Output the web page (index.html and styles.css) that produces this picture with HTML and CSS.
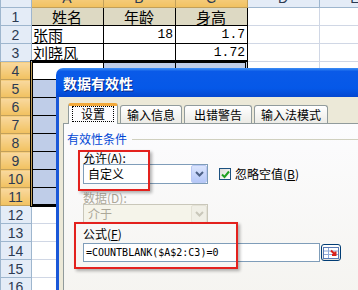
FILE: index.html
```html
<!DOCTYPE html>
<html lang="zh-CN">
<head>
    <meta charset="UTF-8">
    <meta name="viewport" content="width=device-width, initial-scale=1.0">
    <title>数据有效性</title>
    <link rel="stylesheet" href="styles.css">
</head>
<body>
    <!-- Worksheet -->
    <table class="sheet">
        <colgroup>
            <col class="c-num"><col class="c-cell"><col class="c-cell"><col class="c-cell"><col class="c-cell"><col class="c-cell">
        </colgroup>
        <tr class="col-head">
            <th></th><th class="sel">A</th><th class="sel">B</th><th class="sel">C</th><th>D</th><th>E</th>
        </tr>
        <tr><th>1</th><td class="b head">姓名</td><td class="b head">年龄</td><td class="b head">身高</td><td></td><td></td></tr>
        <tr><th>2</th><td class="b">张雨</td><td class="b num">18</td><td class="b num">1.7</td><td></td><td></td></tr>
        <tr><th>3</th><td class="b">刘晓风</td><td class="b"></td><td class="b num">1.72</td><td></td><td></td></tr>
        <tr><th class="sel">4</th><td class="b"></td><td class="b hl"></td><td class="b hl"></td><td></td><td></td></tr>
        <tr><th class="sel">5</th><td class="b hl"></td><td class="b hl"></td><td class="b hl"></td><td></td><td></td></tr>
        <tr><th class="sel">6</th><td class="b hl"></td><td class="b hl"></td><td class="b hl"></td><td></td><td></td></tr>
        <tr><th class="sel">7</th><td class="b hl"></td><td class="b hl"></td><td class="b hl"></td><td></td><td></td></tr>
        <tr><th class="sel">8</th><td class="b hl"></td><td class="b hl"></td><td class="b hl"></td><td></td><td></td></tr>
        <tr><th class="sel">9</th><td class="b hl"></td><td class="b hl"></td><td class="b hl"></td><td></td><td></td></tr>
        <tr><th class="sel">10</th><td class="b hl"></td><td class="b hl"></td><td class="b hl"></td><td></td><td></td></tr>
        <tr><th class="sel">11</th><td class="b hl"></td><td class="b hl"></td><td class="b hl"></td><td></td><td></td></tr>
        <tr><th>12</th><td></td><td></td><td></td><td></td><td></td></tr>
        <tr><th>13</th><td></td><td></td><td></td><td></td><td></td></tr>
        <tr><th>14</th><td></td><td></td><td></td><td></td><td></td></tr>
        <tr><th>15</th><td></td><td></td><td></td><td></td><td></td></tr>
        <tr><th>16</th><td></td><td></td><td></td><td></td><td></td></tr>
    </table>

    <!-- Selected range A4:C11 -->
    <div class="selection"></div>

    <!-- Data validation dialog -->
    <div class="dialog">
        <div class="dialog-title">数据有效性</div>
        <div class="dialog-body">
            <div class="tabs">
                <div class="tab active"><span class="focus">设置</span></div>
                <div class="tab">输入信息</div>
                <div class="tab wide">出错警告</div>
                <div class="tab">输入法模式</div>
            </div>
            <div class="panel">
                <div class="group">有效性条件</div>

                <div class="label">允许(<u>A</u>):</div>
                <div class="row">
                    <div class="combo">
                        <span>自定义</span>
                        <span class="drop">
                            <svg width="9" height="6" viewBox="0 0 9 6"><path d="M1 1l3.5 3.5L8 1" fill="none" stroke="#4d6185" stroke-width="2"/></svg>
                        </span>
                    </div>
                    <div class="check">
                        <span class="box">
                            <svg width="9" height="9" viewBox="0 0 9 9"><path d="M1 4.5l2.5 2.5L8 1.5" fill="none" stroke="#21a121" stroke-width="2"/></svg>
                        </span>
                        <span>忽略空值(<u>B</u>)</span>
                    </div>
                </div>

                <div class="label off">数据(<u>D</u>):</div>
                <div class="row">
                    <div class="combo off">
                        <span>介于</span>
                        <span class="drop">
                            <svg width="9" height="6" viewBox="0 0 9 6"><path d="M1 1l3.5 3.5L8 1" fill="none" stroke="#c9c7ba" stroke-width="2"/></svg>
                        </span>
                    </div>
                </div>

                <div class="label formula-label">公式(<u>F</u>)</div>
                <div class="row formula-row">
                    <div class="formula">=COUNTBLANK($A$2:C3)=0</div>
                    <div class="ref-btn">
                        <svg width="16" height="12" viewBox="0 0 16 12">
                            <rect x="0.5" y="0.5" width="15" height="11" fill="#fff" stroke="#5a7bb5"/>
                            <path d="M1 4h14M1 7.5h14M5.5 1v10" stroke="#8fa9d8"/>
                            <path d="M8 3.5l4.5 4.5M12.5 4.5v3.5H9" fill="none" stroke="#d8221b" stroke-width="2"/>
                        </svg>
                    </div>
                </div>
            </div>
        </div>
        <!-- red highlight boxes -->
        <div class="mark mark-allow"></div>
        <div class="mark mark-formula"></div>
    </div>
</body>
</html>
```

FILE: styles.css
```css
* {
    box-sizing: border-box;
}

body {
    margin: 0;
    width: 358px;
    height: 290px;
    overflow: hidden;
    position: relative;
    background-color: #fff;
    font-family: "Noto Sans CJK SC", sans-serif;
}

/* ---------- worksheet ---------- */

.sheet {
    border-collapse: collapse;
    table-layout: fixed;
    width: 390px;
    margin-top: -13px;
    font-size: 15px;
    color: #000;
}

.c-num {
    width: 31px;
}

.c-cell {
    width: 72px;
}

.sheet tr {
    height: 18px;
}

.sheet td,
.sheet th {
    padding: 0 2px 0 1px;
    border: 1px solid #d0d7e5;
    line-height: 16px;
    white-space: nowrap;
    overflow: hidden;
    font-weight: normal;
}

.sheet th {
    font-family: "Liberation Sans", sans-serif;
    font-size: 14px;
    color: #2c3a52;
    text-align: center;
    background-color: #e4ecf7;
    border-color: #9eb6ce;
}

.sheet th.sel {
    background: linear-gradient(#f9d99f, #f1c15f);
    border-color: #c2a05a;
}

.sheet .col-head {
    height: 20px;
}

.sheet td.b {
    border-color: #000;
}

.sheet td.head {
    background-color: #ddd9c3;
    text-align: center;
}

.sheet td.num {
    text-align: right;
    font-family: "Liberation Mono", monospace;
    font-size: 13px;
}

.sheet td.hl {
    background-color: #bfcde8;
}

.selection {
    position: absolute;
    left: 30px;
    top: 60px;
    width: 218px;
    height: 147px;
    border: 3px double #000;
}

/* ---------- dialog ---------- */

.dialog {
    position: absolute;
    left: 56px;
    top: 68px;
    width: 330px;
    height: 240px;
    font-size: 12px;
}

.dialog-title {
    height: 29px;
    padding-left: 7px;
    border-radius: 7px 7px 0 0;
    background: linear-gradient(#3c8ef5, #0a5ae8 12%, #0558e8 70%, #0447d0);
    color: #fff;
    font-size: 14px;
    font-weight: bold;
    line-height: 30px;
    text-shadow: 1px 1px 0 #0a2a8a;
}

.dialog-body {
    height: 211px;
    padding: 8px 0 0 4px;
    border-left: 3px solid #1a58d8;
    background-color: #ece9d8;
}

.tabs {
    display: flex;
    align-items: flex-end;
    gap: 2px;
    height: 18px;
    padding-left: 5px;
}

.tab {
    height: 18px;
    padding: 0 6px;
    border: 1px solid #919b9c;
    border-bottom: none;
    border-radius: 3px 3px 0 0;
    background: linear-gradient(#fff, #ecebe6);
    line-height: 17px;
    color: #000;
}

.tab.wide {
    padding: 0 9px;
}

.tab.active {
    position: relative;
    z-index: 1;
    height: 21px;
    margin-bottom: -1px;
    padding: 0 3px;
    border-top: 3px solid #f2a93b;
    background: #fcfcfe;
    line-height: 15px;
}

.focus {
    display: inline-block;
    padding: 0 8px;
    border: 1px dotted #000;
    line-height: 14px;
}

.panel {
    height: 200px;
    padding: 8px 0 0 3px;
    border: 1px solid #919b9c;
    background: linear-gradient(#fcfcfe, #f4f3ee);
}

.group {
    display: flex;
    align-items: center;
    line-height: 14px;
    color: #0046d5;
}

.group::after {
    content: "";
    flex: 1;
    height: 1px;
    margin-left: 5px;
    background-color: #d0d0bf;
}

.label {
    margin: 5px 0 0 16px;
    line-height: 13px;
    color: #000;
}

.label.off {
    margin-top: 7px;
    color: #aca899;
}

.formula-label {
    margin-top: 3px;
}

.row {
    display: flex;
    align-items: center;
    margin-left: 16px;
}

.combo {
    display: flex;
    width: 125px;
    height: 20px;
    border: 1px solid #7f9db9;
    background-color: #fff;
    line-height: 18px;
    padding-left: 4px;
}

.combo.off {
    border-color: #c9c7ba;
    background-color: #f5f4ea;
    color: #aca899;
}

.drop {
    display: flex;
    align-items: center;
    justify-content: center;
    width: 16px;
    margin-left: auto;
    border: 1px solid #bac9f4;
    border-radius: 2px;
    background: linear-gradient(#dbe5fd, #b6c8f8);
}

.combo.off .drop {
    border-color: #e4e2d6;
    background: #f0efe6;
}

.check {
    display: flex;
    align-items: center;
    gap: 4px;
    margin-left: 11px;
    line-height: 14px;
}

.box {
    display: flex;
    align-items: center;
    justify-content: center;
    width: 12px;
    height: 12px;
    border: 1px solid #1c5180;
    background: linear-gradient(135deg, #dcdcd7, #fff);
}

.formula-row {
    margin-top: 3px;
}

.formula {
    width: 237px;
    height: 19px;
    padding-left: 2px;
    border: 1px solid #7f9db9;
    background-color: #fff;
    font-family: "DejaVu Sans Mono", monospace;
    font-size: 10px;
    line-height: 17px;
}

.ref-btn {
    display: flex;
    align-items: center;
    justify-content: center;
    width: 20px;
    height: 17px;
    margin-left: 1px;
    border: 1px solid #003c74;
    border-radius: 3px;
    background: linear-gradient(#fff, #e3e2da);
}

.mark {
    position: absolute;
    border: 2px solid #e3211d;
    box-shadow: 2px 2px 3px rgba(0, 0, 0, 0.3);
}

.mark-allow {
    left: 22px;
    top: 82px;
    width: 72px;
    height: 41px;
}

.mark-formula {
    left: 18px;
    top: 154px;
    width: 164px;
    height: 47px;
}
```
